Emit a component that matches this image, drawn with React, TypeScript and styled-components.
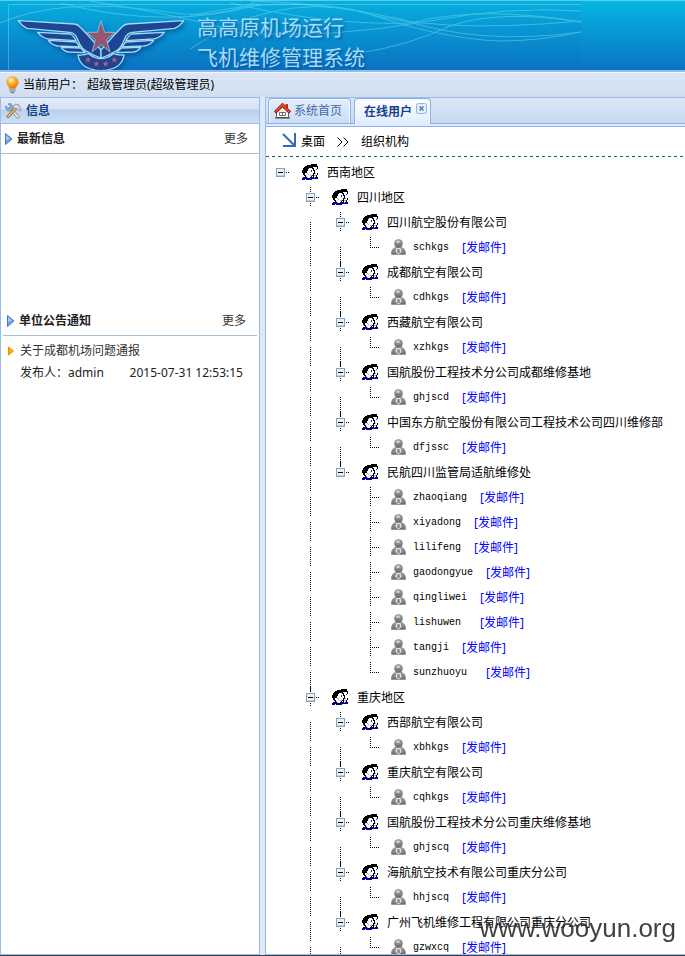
import React from 'react';
import styled, { createGlobalStyle, css } from 'styled-components';

const Global = createGlobalStyle`
  * { box-sizing: border-box; }
  body { margin: 0; background: #dfe8f6; }
  button { font: inherit; color: inherit; border: 0; padding: 0; margin: 0; background: none; cursor: pointer; }
  h1, h2, h3, ul, p { margin: 0; padding: 0; font-weight: inherit; font-size: inherit; list-style: none; }
  a { text-decoration: none; color: inherit; }
  svg { display: block; flex: none; }
`;

const Page = styled.div`
  display: flex;
  flex-direction: column;
  height: 100vh;
  overflow: hidden;
  font: 12px/18px "Noto Sans", "Noto Sans CJK SC", sans-serif;
  color: #000;
  border-bottom: 1px solid #39424f;
`;

const Header = styled.header`
  position: relative;
  flex: none;
  display: flex;
  height: 72px;
  padding: 10px 0 0 17px;
  gap: 12px;
  border-top: 1px solid #58cfe8;
  border-bottom: 2px solid #99bbe8;
  background: linear-gradient(#06b5e3, #0a74c5);
  overflow: hidden;
`;

const Waves = styled.svg`
  position: absolute;
  left: 0;
  top: 0;
`;

const Emblem = styled.svg`
  position: relative;
  margin-top: 2px;
  filter: drop-shadow(2px 3px 2px rgba(0, 50, 120, 0.45));
`;

const SiteTitle = styled.h1`
  position: relative;
  font: 21px/30px "Noto Sans CJK SC", sans-serif;
  color: #a3daf6;
  text-shadow: 2px 2px 3px rgba(0, 60, 130, 0.6);
  span { display: block; }
`;

const UserBar = styled.div`
  flex: none;
  display: flex;
  align-items: center;
  height: 25px;
  padding: 0 5px;
  gap: 3px;
  border-top: 1px solid #f1f6fc;
  background: linear-gradient(#dbe6f4, #cfdef0);
  span + span { margin-left: 1px; }
`;

const Body = styled.div`
  flex: 1;
  min-height: 0;
  display: grid;
  grid-template-columns: 260px minmax(0, 1fr);
  gap: 5px;
  background: #dfe8f6;
`;

const Panel = styled.section`
  display: flex;
  flex-direction: column;
  min-height: 0;
  overflow: hidden;
  background: #fff;
  border: 1px solid #99bbe8;
`;

const RightPanel = styled(Panel)`
  border-right: 0;
`;

const PanelTitle = styled.h2`
  flex: none;
  display: flex;
  align-items: center;
  gap: 4px;
  height: 26px;
  padding: 0 4px;
  font-weight: bold;
  color: #15428b;
  border-bottom: 1px solid #99bbe8;
  background: linear-gradient(#e3ecf8 0, #d5e2f4 11px, #b9d0ed 12px, #cddff4 100%);
`;

const NewsBlock = styled.div<{ $inset?: boolean }>`
  flex: none;
  min-height: ${p => (p.$inset ? 0 : '182px')};
  padding: ${p => (p.$inset ? '0 2px' : 0)};
`;

const NewsHead = styled.div`
  display: flex;
  align-items: center;
  gap: 4px;
  height: 30px;
  padding: 0 11px 0 4px;
  border-bottom: 1px solid #a9bfd3;
  color: #333;
  h3 { flex: 1; font-weight: bold; color: #222; }
`;

const Notice = styled.div`
  display: grid;
  grid-template-columns: 8px 1fr auto;
  column-gap: 5px;
  align-items: center;
  padding: 6px 14px 0 4px;
  color: #333;
  a { grid-column: 2 / 4; }
  p { grid-column: 2; }
  a, p, time { line-height: 18px; }
  p, time { margin-top: 4px; color: #222; }
`;

const TabStrip = styled.div`
  flex: none;
  display: flex;
  align-items: flex-end;
  gap: 3px;
  height: 26px;
  padding: 1px 2px 0;
  background: linear-gradient(#dbe7f6, #c8daf0);
  border-bottom: 1px solid #8db2e3;
`;

const Tab = styled.div<{ $active?: boolean }>`
  display: flex;
  align-items: center;
  height: 25px;
  padding: 0 8px 0 5px;
  gap: 3px;
  color: #416aa3;
  border: 1px solid #8db2e3;
  border-bottom: 0;
  border-radius: 4px 4px 0 0;
  background: linear-gradient(#e4eefb, #c9dcf5);
  box-shadow: inset 1px 1px 0 #f2f7fe, inset -1px 0 0 #f2f7fe;
  ${p => p.$active && css`
    height: 26px;
    margin-bottom: -1px;
    padding: 0 3px 0 9px;
    gap: 4px;
    font-weight: bold;
    color: #15428b;
    background: linear-gradient(#fff, #deecfd);
  `}
`;

const CloseTab = styled.button`
  display: flex;
  align-self: flex-start;
  padding-top: 4px;
`;

const TabFoot = styled.div`
  flex: none;
  height: 3px;
  background: #deecfd;
  border-bottom: 1px solid #8db2e3;
`;

const Crumbs = styled.nav`
  flex: none;
  display: flex;
  align-items: center;
  gap: 12px;
  height: 30px;
  padding-left: 16px;
  background:
    repeating-linear-gradient(90deg, #0a6b45 0 3px, transparent 3px 6px) bottom / 100% 1px no-repeat;
`;

const CrumbHome = styled.a`
  display: flex;
  align-items: center;
  gap: 5px;
  svg { margin-bottom: 5px; }
`;

const Tree = styled.ul`
  flex: 1;
  min-height: 0;
  overflow: hidden;
  padding-top: 3px;
`;

const Row = styled.div`
  display: flex;
  height: 25px;
`;

const Cell = styled.span`
  flex: none;
  width: 30px;
  height: 25px;
  svg { overflow: visible; }
`;

const NodeLabel = styled.span`
  display: flex;
  align-items: center;
  gap: 7px;
  padding-left: 6px;
  white-space: nowrap;
  svg { margin-bottom: 1px; }
`;

const UserLabel = styled(NodeLabel)`
  padding-left: 5px;
`;

const Login = styled.span`
  font: 10px/18px "Liberation Mono", monospace;
  white-space: pre;
  margin-right: 6px;
`;

const Mail = styled.a`
  color: #00f;
`;

const Watermark = styled.div`
  position: fixed;
  right: 9px;
  bottom: 12px;
  font: 26px/32px "Liberation Sans", sans-serif;
  color: rgba(45, 45, 50, 0.9);
  pointer-events: none;
`;

function Wings() {
  const half = (
    <>
      <path d="M57 62 L225 72 Q236 73 243 82 L268 108 L305 150 V174 L284 166 L258 152 Q248 146 242 134 L230 108 Q224 99 212 97 L84 85 Q70 80 57 62Z" />
      <path d="M115 97 L212 102 Q222 106 230 122 L148 117 Q128 114 115 97Z" />
      <path d="M147 121 L231 126 L242 141 L176 138 Q158 136 147 121Z" />
      <path d="M186 142 L244 144 L258 158 L208 156 Q194 154 186 142Z" />
    </>
  );
  return (
    <Emblem width="168" height="60" viewBox="53 39 504 180" fill="#1d4593" stroke="#9edcf3" strokeWidth="4" strokeLinejoin="round" aria-hidden="true">
      {half}
      <g transform="translate(610 0) scale(-1 1)">{half}</g>
      <path d="M236 165 Q256 166 268 161 Q286 176 305 176 Q324 176 342 161 Q354 166 374 165 Q368 209 305 212 Q242 209 236 165Z" />
      <path fill="#96566f" strokeWidth="2" d="M305 62 L316 97 L348 97 L322 119 L332 156 L305 134 L278 156 L288 119 L262 97 L294 97Z" />
      <g fill="#b65c70" stroke="none">
        {[[266, 179], [291, 191], [319, 191], [345, 179]].map(([x, y]) => (
          <path key={x} transform={`translate(${x} ${y}) scale(3)`} d="M0-3L1-1H3L1.300.8L2 3L0 1.700L-2 3L-1.300.8L-3-1H-1Z" />
        ))}
      </g>
    </Emblem>
  );
}

function Bulb() {
  return (
    <svg width="15" height="18" viewBox="0 0 15 18" aria-hidden="true">
      <defs>
        <radialGradient id="glow" cx=".38" cy=".3" r=".7">
          <stop offset="0" stopColor="#fff3c4" />
          <stop offset=".45" stopColor="#ffb52e" />
          <stop offset="1" stopColor="#e97408" />
        </radialGradient>
      </defs>
      <path d="M5 11h5v4l-1.500 2h-2L5 15z" fill="#8b9097" stroke="#62676f" strokeWidth=".6" />
      <path d="M5 13h5M5 15h5" stroke="#d8dbe0" strokeWidth=".7" />
      <path d="M7.500.6a5.800 5.500 0 0 1 5.800 5.700c0 2.700-2 3.500-2.800 6h-6C3.700 9.800 1.700 9 1.700 6.300A5.800 5.500 0 0 1 7.500.6z" fill="url(#glow)" stroke="#f0a040" strokeWidth=".6" />
    </svg>
  );
}

function Tools() {
  return (
    <svg width="17" height="16" viewBox="0 0 17 16" aria-hidden="true" strokeLinecap="round">
      <path d="M5 5l8 9" stroke="#9a9ea6" strokeWidth="3.400" />
      <path d="M5 5l8 9" stroke="#e8e9ed" strokeWidth="1.600" />
      <path d="M1 3l3 3 2-3-3-2 3-.4L8 4 6.500 7.500 3 8 1 6z" fill="#8fb0dc" stroke="#5a7fb5" strokeWidth=".7" />
      <path d="M11 5l-8 8.500" stroke="#8a622b" strokeWidth="3" />
      <path d="M11 5l-8 8.500" stroke="#edc784" strokeWidth="1.400" />
      <path d="M8 3l3-2 3 1 2 4-1 2-2-2-2 0z" fill="#d7dbe2" stroke="#7e8794" strokeWidth=".8" />
    </svg>
  );
}

function House() {
  return (
    <svg width="17" height="16" viewBox="0 0 17 16" aria-hidden="true">
      <path d="M11.500 1h2.500v5h-2.500z" fill="#c3311e" />
      <path d="M2.500 9L8.500 4l6 5v5.500h-12z" fill="#fffbe8" stroke="#6b5a44" />
      <path d="M1 9.500L8.500 2 16 9.500" fill="none" stroke="#8c1610" strokeWidth="3.200" />
      <path d="M1.500 9L8.500 2l7 7" fill="none" stroke="#f6503c" strokeWidth="1.600" />
      <path d="M5.500 9.500h6v3h-6z" fill="#fff" stroke="#49617b" strokeWidth=".9" />
      <path d="M8.500 9.500v3" stroke="#49617b" strokeWidth=".9" />
      <path d="M1 15h15" stroke="#3f3a35" />
    </svg>
  );
}

function Triangle({ orange }: { orange?: boolean }) {
  return orange ? (
    <svg width="8" height="10" viewBox="0 0 8 10" aria-hidden="true">
      <path d="M1.500 1v8L6.500 5z" fill="#ffb400" stroke="#f08a00" />
    </svg>
  ) : (
    <svg width="8" height="14" viewBox="0 0 8 14" aria-hidden="true">
      <path d="M.5 1.500v11L7 7z" fill="#6f9fe0" stroke="#4677c4" />
      <path d="M1 3v5l4-1z" fill="#a9c9f3" />
    </svg>
  );
}

const peoplePixels = [
  '.........######..',
  '.....##########..',
  '...#############.',
  '..#########wwww#.',
  '.######www##www#.',
  '.#####wwwww#wwBw.',
  '######wwwBw##www.',
  '#####wwwwBww#wwww',
  '#####wwwwwww#www.',
  '.##wwgwwwww##gw#.',
  '.##wwwgwwww#www#.',
  '..##wwwwgg##gg#..',
  '...#gwwww#.#ww#..',
  '.bbb#gww#bb#gbbb.',
  'bbbbbb##bbbbbbbb.',
  'bbb.bbbbbb.......',
];
const peopleInk: Record<string, string> = { '#': '#000', w: '#fff', g: '#aaa', b: '#0000a0', B: '#2222f0' };

function pixelPath(ch: string) {
  return peoplePixels
    .map((row, y) => [...row].map((c, x) => (c === ch ? `M${x} ${y}h1v1h-1z` : '')).join(''))
    .join('');
}
const peoplePaths = Object.keys(peopleInk).map(ch => ({ fill: peopleInk[ch], d: pixelPath(ch) }));

function People() {
  return (
    <svg width="18" height="16" viewBox="0 0 18 16" aria-hidden="true">
      {peoplePaths.map(p => <path key={p.fill} {...p} />)}
    </svg>
  );
}

function Person() {
  return (
    <svg width="15" height="16" viewBox="0 0 15 16" aria-hidden="true">
      <defs>
        <linearGradient id="grey" x2="0" y2="1">
          <stop offset="0" stopColor="#a8a8a8" />
          <stop offset="1" stopColor="#6b6b6b" />
        </linearGradient>
      </defs>
      <path d="M.5 15.500V13Q1 9.500 5 8h5q4 1.500 4.500 5v2.500z" fill="url(#grey)" stroke="#808080" strokeWidth=".6" />
      <path d="M5.500 9h4L10.500 13l-3 2.500-3-2.500z" fill="#e6e6e6" />
      <path d="M6.500 10h2L9 13.500l-1.500 1-1.500-1z" fill="#8a8a8a" />
      <circle cx="7.500" cy="4.500" r="4" fill="url(#grey)" stroke="#777" strokeWidth=".6" />
      <ellipse cx="7" cy="2.800" rx="2" ry="1.200" fill="#d0d0d0" />
    </svg>
  );
}

type Guide = 'line' | 'blank' | 'tee' | 'corner';

function GuideMark({ kind }: { kind: Guide }) {
  const d = {
    line: 'M14.500 12v19',
    blank: '',
    tee: 'M14.500 2v19M16 12.500h8',
    corner: 'M14.500 2v11M16 12.500h8',
  }[kind];
  return (
    <Cell>
      <svg width="30" height="25" viewBox="0 0 30 25" aria-hidden="true">
        <path d={d} stroke="#000" strokeDasharray="1 1" shapeRendering="crispEdges" />
      </svg>
    </Cell>
  );
}

function Toggle({ kind }: { kind: 'root' | 'mid' | 'last' }) {
  const d = { root: '', mid: 'M14.500 2v19', last: 'M14.500 2v10' }[kind];
  return (
    <Cell as="button" aria-label="折叠">
      <svg width="30" height="25" viewBox="0 0 30 25" aria-hidden="true" shapeRendering="crispEdges">
        <path d={d + 'M20 12.500h4'} stroke="#000" strokeDasharray="1 1" />
        <rect x="10.500" y="8.500" width="8" height="8" fill="#f2f0ea" stroke="#7aa5d2" />
        <path d="M11 15.500h7" stroke="#d2cdbf" />
        <path d="M12 12.500h5" stroke="#000" />
      </svg>
    </Cell>
  );
}

type Org = { name: string; users: string[] };
const regions: { name: string; orgs: Org[]; open?: boolean }[] = [
  {
    name: '四川地区',
    orgs: [
      { name: '四川航空股份有限公司', users: ['schkgs'] },
      { name: '成都航空有限公司', users: ['cdhkgs'] },
      { name: '西藏航空有限公司', users: ['xzhkgs'] },
      { name: '国航股份工程技术分公司成都维修基地', users: ['ghjscd'] },
      { name: '中国东方航空股份有限公司工程技术公司四川维修部', users: ['dfjssc'] },
      {
        name: '民航四川监管局适航维修处',
        users: ['zhaoqiang', 'xiyadong', 'lilifeng', 'gaodongyue', 'qingliwei', 'lishuwen ', 'tangji', 'sunzhuoyu '],
      },
    ],
  },
  {
    name: '重庆地区',
    open: true,
    orgs: [
      { name: '西部航空有限公司', users: ['xbhkgs'] },
      { name: '重庆航空有限公司', users: ['cqhkgs'] },
      { name: '国航股份工程技术分公司重庆维修基地', users: ['ghjscq'] },
      { name: '海航航空技术有限公司重庆分公司', users: ['hhjscq'] },
      { name: '广州飞机维修工程有限公司重庆分公司', users: ['gzwxcq'] },
    ],
  },
];

function OrgNode({ org, last }: { org: Org; last: boolean }) {
  return (
    <li>
      <Row>
        <GuideMark kind="blank" />
        <GuideMark kind="line" />
        <Toggle kind={last ? 'last' : 'mid'} />
        <NodeLabel><People />{org.name}</NodeLabel>
      </Row>
      <ul>
        {org.users.map((u, i) => (
          <li key={u}>
            <Row>
              <GuideMark kind="blank" />
              <GuideMark kind="line" />
              <GuideMark kind={last ? 'blank' : 'line'} />
              <GuideMark kind={i === org.users.length - 1 ? 'corner' : 'tee'} />
              <UserLabel>
                <Person />
                <Login>{u}</Login>
                <Mail href="#mail">[发邮件]</Mail>
              </UserLabel>
            </Row>
          </li>
        ))}
      </ul>
    </li>
  );
}

export default function App() {
  return (
    <Page>
      <Global />
      <Header>
        <Waves width="581" height="69" viewBox="0 0 581 69" fill="none" stroke="#8de3f5" aria-hidden="true">
          <path d="M0 0H581V69H0z" fill="#0a62a8" stroke="none" opacity=".08" />
          <path d="M8.500 69V3.500H581" opacity=".4" />
          <g opacity=".42">
            <path d="M60 2Q170 30 260 3" />
            <path d="M90 0Q190 16 240 32Q330 38 430 20Q510 5 581 10" />
            <path d="M190 15Q270-4 350 8Q430 34 581 20" />
            <path d="M230 2Q330 25 410 22Q480 4 581 21" />
            <path d="M250 0Q330 2 400 18Q480 45 581 31" />
            <path d="M190 48Q270-8 360 10Q440 38 500 40Q540 40 581 31" />
            <path d="M360 52Q410 44 450 25Q500 8 581 21" />
            <path d="M0 22Q60-4 160 10Q210 20 255 2" />
          </g>
        </Waves>
        <Wings />
        <SiteTitle><span>高高原机场运行</span><span>飞机维修管理系统</span></SiteTitle>
      </Header>
      <UserBar>
        <Bulb />
        <span>当前用户：</span>
        <span>超级管理员(超级管理员)</span>
      </UserBar>
      <Body>
        <Panel>
          <PanelTitle><Tools />信息</PanelTitle>
          <NewsBlock>
            <NewsHead><Triangle /><h3>最新信息</h3><a href="#news">更多</a></NewsHead>
          </NewsBlock>
          <NewsBlock $inset>
            <NewsHead><Triangle /><h3>单位公告通知</h3><a href="#notices">更多</a></NewsHead>
            <Notice>
              <Triangle orange />
              <a href="#notice">关于成都机场问题通报</a>
              <p>发布人：admin</p>
              <time>2015-07-31 12:53:15</time>
            </Notice>
          </NewsBlock>
        </Panel>
        <RightPanel>
          <TabStrip>
            <Tab><House /><button>系统首页</button></Tab>
            <Tab $active>
              <button>在线用户</button>
              <CloseTab aria-label="关闭">
                <svg width="11" height="11" viewBox="0 0 11 11" aria-hidden="true">
                  <rect x=".5" y=".5" width="10" height="10" rx="2" fill="#e6f0fc" stroke="#8fb3de" />
                  <path d="M3.500 3.500l4 4M7.500 3.500l-4 4" stroke="#5c7fae" strokeWidth="1.700" />
                </svg>
              </CloseTab>
            </Tab>
          </TabStrip>
          <TabFoot />
          <Crumbs>
            <CrumbHome href="#desktop">
              <svg width="14" height="14" viewBox="0 0 14 14" fill="none" stroke="#3a68b8" strokeWidth="2" aria-hidden="true">
                <path d="M1 1l11 11M13 0v13H1" />
              </svg>
              桌面
            </CrumbHome>
            <svg width="12" height="10" viewBox="0 0 12 10" fill="none" stroke="#000" aria-hidden="true">
              <path d="M.5.5L5 5 .5 9.500M6.500.5L11 5 6.500 9.500" />
            </svg>
            <span>组织机构</span>
          </Crumbs>
          <Tree>
            <li>
              <Row>
                <Toggle kind="root" />
                <NodeLabel><People />西南地区</NodeLabel>
              </Row>
              <ul>
                {regions.map(r => (
                  <li key={r.name}>
                    <Row>
                      <GuideMark kind="blank" />
                      <Toggle kind="mid" />
                      <NodeLabel><People />{r.name}</NodeLabel>
                    </Row>
                    <ul>
                      {r.orgs.map((o, i) => (
                        <OrgNode key={o.name} org={o} last={!r.open && i === r.orgs.length - 1} />
                      ))}
                    </ul>
                  </li>
                ))}
              </ul>
            </li>
          </Tree>
        </RightPanel>
      </Body>
      <Watermark>www.wooyun.org</Watermark>
    </Page>
  );
}
